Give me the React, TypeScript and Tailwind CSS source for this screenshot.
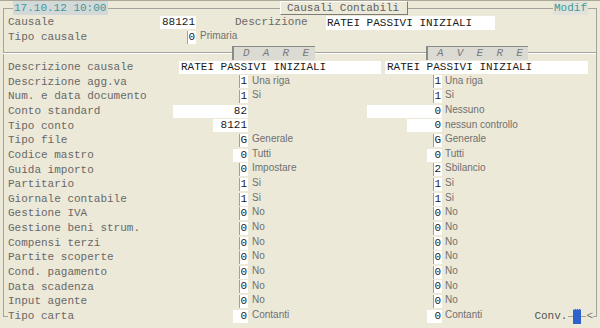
import React from 'react'

type Row = {
  label: string
  d: string
  dd: string
  dw: string
  a: string
  ad: string
  aw: string
}

const narrow = 'w-[9px] border-l border-[#a0a0a0]'

const rows: Row[] = [
  { label: 'Descrizione agg.va', d: '1', dd: 'Una riga', dw: narrow, a: '1', ad: 'Una riga', aw: narrow },
  { label: 'Num. e data documento', d: '1', dd: 'Si', dw: narrow, a: '1', ad: 'Si', aw: narrow },
  { label: 'Conto standard', d: '82', dd: '', dw: 'w-[75px]', a: '0', ad: 'Nessuno', aw: 'w-[75px]' },
  { label: 'Tipo conto', d: '8121', dd: '', dw: 'w-[35px]', a: '0', ad: 'nessun controllo', aw: 'w-[35px]' },
  { label: 'Tipo file', d: 'G', dd: 'Generale', dw: narrow, a: 'G', ad: 'Generale', aw: narrow },
  { label: 'Codice mastro', d: '0', dd: 'Tutti', dw: 'w-[15px]', a: '0', ad: 'Tutti', aw: 'w-[15px]' },
  { label: 'Guida importo', d: '0', dd: 'Impostare', dw: narrow, a: '2', ad: 'Sbilancio', aw: narrow },
  { label: 'Partitario', d: '1', dd: 'Si', dw: narrow, a: '1', ad: 'Si', aw: narrow },
  { label: 'Giornale contabile', d: '1', dd: 'Si', dw: narrow, a: '1', ad: 'Si', aw: narrow },
  { label: 'Gestione IVA', d: '0', dd: 'No', dw: narrow, a: '0', ad: 'No', aw: narrow },
  { label: 'Gestione beni strum.', d: '0', dd: 'No', dw: narrow, a: '0', ad: 'No', aw: narrow },
  { label: 'Compensi terzi', d: '0', dd: 'No', dw: narrow, a: '0', ad: 'No', aw: narrow },
  { label: 'Partite scoperte', d: '0', dd: 'No', dw: narrow, a: '0', ad: 'No', aw: narrow },
  { label: 'Cond. pagamento', d: '0', dd: 'No', dw: narrow, a: '0', ad: 'No', aw: narrow },
  { label: 'Data scadenza', d: '0', dd: 'No', dw: narrow, a: '0', ad: 'No', aw: narrow },
  { label: 'Input agente', d: '0', dd: 'No', dw: narrow, a: '0', ad: 'No', aw: narrow },
]

function Field({ value, className }: { value: string; className: string }) {
  return (
    <div className={`h-[13px] leading-[13px] bg-white text-right text-[#1a1a1a] pr-px overflow-hidden ${className}`}>
      {value}
    </div>
  )
}

function Hint({ children }: { children: React.ReactNode }) {
  return (
    <span className="font-['Liberation_Sans',sans-serif] text-[10px] leading-[11px] text-[#707070] self-start whitespace-nowrap">
      {children}
    </span>
  )
}

function FormRow({ row }: { row: Row }) {
  return (
    <div className="flex items-center h-[14.65px]">
      <div className="w-[240px] flex items-center justify-between">
        <span>{row.label}</span>
        <Field value={row.d} className={row.dw} />
      </div>
      <div className="w-[194px] flex items-center justify-between self-stretch">
        <div className="pl-[4px] flex h-full">
          <Hint>{row.dd}</Hint>
        </div>
        <Field value={row.a} className={row.aw} />
      </div>
      <div className="pl-[3px] flex h-full">
        <Hint>{row.ad}</Hint>
      </div>
    </div>
  )
}

function Tab({ text, className }: { text: string; className: string }) {
  return (
    <div
      className={`h-[14px] bg-[#dcdbd3] border-l-2 border-t border-[#8a8a86] italic text-[#7a7a7a] leading-[13px] pl-[9px] whitespace-pre ${className}`}
    >
      {text}
    </div>
  )
}

export default function App() {
  return (
    <div className="w-[600px] h-[328px] bg-[#ece9d8] overflow-hidden font-['Liberation_Mono',monospace] text-[11px] text-[#686868]">
      <div className="h-px bg-[#aaa796]" />
      <div className="mx-[3px] mt-[7px] border-t border-l border-r border-[#a4a49e] pb-[7px]">
        {/* header sitting on the frame line */}
        <div className="-mt-[8px] h-[14px] flex items-stretch">
          <div className="ml-[9px] w-[95px] bg-[#d3d8d8] text-[#3a9a9a] leading-[14px] pl-px">17.10.12 10:00</div>
          <div className="ml-[172px] w-[128px] bg-[#ece9d8] border-t border-l border-white border-r border-b border-r-[#7c7c78] border-b-[#7c7c78] leading-[12px] pl-[6px] text-[#606060]">
            Causali Contabili
          </div>
          <div className="ml-auto mr-[8px] bg-[#e2e2dc] text-[#3a9a9a] leading-[14px] px-px">Modif</div>
        </div>

        <div className="pl-[4px]">
          <div className="flex items-center h-[15px]">
            <span className="w-[152px]">Causale</span>
            <Field value="88121" className="w-[36px]" />
            <span className="ml-[39px] w-[91px]">Descrizione</span>
            <div className="w-[169px] h-[14px] leading-[14px] bg-white text-[#1a1a1a] pl-px">RATEI PASSIVI INIZIALI</div>
          </div>
          <div className="flex items-center h-[15px]">
            <span className="w-[179px]">Tipo causale</span>
            <Field value="0" className="w-[9px] border-l border-[#a0a0a0]" />
            <div className="pl-[4px] flex h-full">
              <Hint>Primaria</Hint>
            </div>
          </div>
        </div>

        <div className="-ml-px flex items-center h-[15px]">
          <div className="w-[229px] h-[2px] border-t border-[#a4a49e] border-b border-b-white" />
          <Tab text={'D  A  R  E'} className="w-[83px]" />
          <div className="w-[111px] h-[2px] border-t border-[#a4a49e] border-b border-b-white" />
          <Tab text={'A  V  E  R  E'} className="w-[102px]" />
          <div className="flex-1 h-[2px] border-t border-[#a4a49e] border-b border-b-white" />
        </div>

        <div className="pl-[4px]">
          <div className="flex items-center h-[14.65px]">
            <span className="w-[171px]">Descrizione causale</span>
            <div className="w-[202px] h-[13px] leading-[13px] bg-white text-[#1a1a1a] pl-[2px]">RATEI PASSIVI INIZIALI</div>
            <div className="ml-[4px] w-[203px] h-[13px] leading-[13px] bg-white text-[#1a1a1a] pl-[2px]">RATEI PASSIVI INIZIALI</div>
          </div>
          {rows.map((r) => (
            <FormRow key={r.label} row={r} />
          ))}
        </div>
      </div>

      {/* last line, drawn over the frame's lower edge */}
      <div className="mx-[3px] -mt-[7px] h-[14.65px] flex items-center">
        <div className="w-[5px] h-px bg-[#a4a49e]" />
        <div className="w-[240px] flex items-center justify-between">
          <span>Tipo carta</span>
          <Field value="0" className="w-[15px]" />
        </div>
        <div className="w-[194px] flex items-center justify-between self-stretch">
          <div className="pl-[4px] flex h-full">
            <Hint>Contanti</Hint>
          </div>
          <Field value="0" className="w-[15px]" />
        </div>
        <div className="pl-[3px] flex h-full">
          <Hint>Contanti</Hint>
        </div>
        <span className="ml-auto text-[#555]">Conv.</span>
        <div className="w-[5px] h-px bg-[#a4a49e] ml-[1px]" />
        <div className="w-[8px] h-[15px] bg-[#2e62cc] border-t border-dotted border-[#9db4e8]" />
        <div className="w-[5px] h-px bg-[#a4a49e]" />
        <span className="text-[#777] leading-none">&lt;</span>
        <div className="w-[4px] h-px bg-[#a4a49e]" />
      </div>
    </div>
  )
}
